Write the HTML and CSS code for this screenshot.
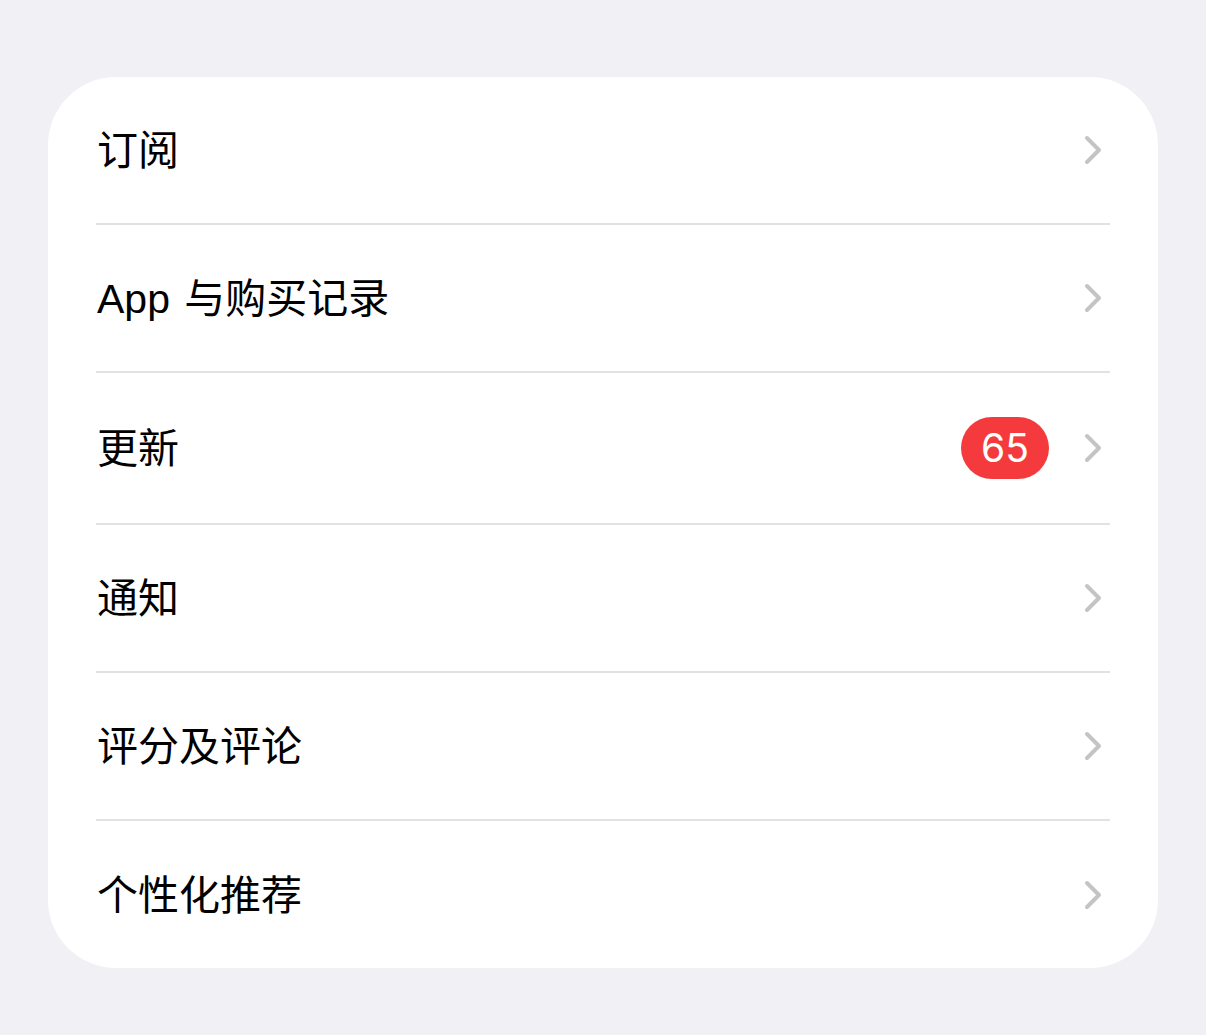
FILE: index.html
```html
<!DOCTYPE html>
<html lang="zh-CN">
<head>
    <meta charset="UTF-8">
    <meta name="viewport" content="width=device-width, initial-scale=1.0">
    <title>账户设置</title>
    <link rel="stylesheet" href="styles.css">
</head>
<body>
    <ul class="menu">
        <li class="menu-row">
            <span class="menu-label">订阅</span>
            <svg class="chevron" viewBox="0 0 18 30"><path d="M3 3 L15 15 L3 27"/></svg>
        </li>
        <li class="menu-row">
            <span class="menu-label">App 与购买记录</span>
            <svg class="chevron" viewBox="0 0 18 30"><path d="M3 3 L15 15 L3 27"/></svg>
        </li>
        <li class="menu-row">
            <span class="menu-label">更新</span>
            <span class="badge">65</span>
            <svg class="chevron" viewBox="0 0 18 30"><path d="M3 3 L15 15 L3 27"/></svg>
        </li>
        <li class="menu-row">
            <span class="menu-label">通知</span>
            <svg class="chevron" viewBox="0 0 18 30"><path d="M3 3 L15 15 L3 27"/></svg>
        </li>
        <li class="menu-row">
            <span class="menu-label">评分及评论</span>
            <svg class="chevron" viewBox="0 0 18 30"><path d="M3 3 L15 15 L3 27"/></svg>
        </li>
        <li class="menu-row">
            <span class="menu-label">个性化推荐</span>
            <svg class="chevron" viewBox="0 0 18 30"><path d="M3 3 L15 15 L3 27"/></svg>
        </li>
    </ul>
</body>
</html>
```

FILE: styles.css
```css
body {
    margin: 0;
    padding: 77px 48px 0 48px;
    background-color: #f0f0f5;
    font-family: "Liberation Sans", "Noto Sans CJK SC", sans-serif;
    height: 1035px;
    box-sizing: border-box;
}
.menu {
    list-style: none;
    margin: 0;
    padding: 0 48px;
    background: #fff;
    border-radius: 68px;
}
.menu-row {
    display: flex;
    align-items: center;
    min-height: 148px;
    padding: 0 8px 0 1px;
    border-bottom: 2px solid #e2e2e4;
    box-sizing: border-box;
}
.menu-row:last-child {
    border-bottom: none;
    min-height: 147px;
}
.menu-label {
    flex: 1;
    padding-top: 4px;
    font-size: 41px;
    color: #000;
    line-height: 1.2;
    word-spacing: 3px;
}
.badge {
    min-width: 88px;
    height: 62px;
    margin: 44px 35px 44px 0;
    border-radius: 31px;
    background: #f43a3c;
    color: #fff;
    font-family: "Inter", "Liberation Sans", sans-serif;
    font-size: 39px;
    line-height: 62px;
    text-align: center;
}
.chevron {
    width: 18px;
    height: 30px;
    fill: none;
    stroke: #c4c4c7;
    stroke-width: 4;
    stroke-linecap: round;
    stroke-linejoin: round;
}
```
